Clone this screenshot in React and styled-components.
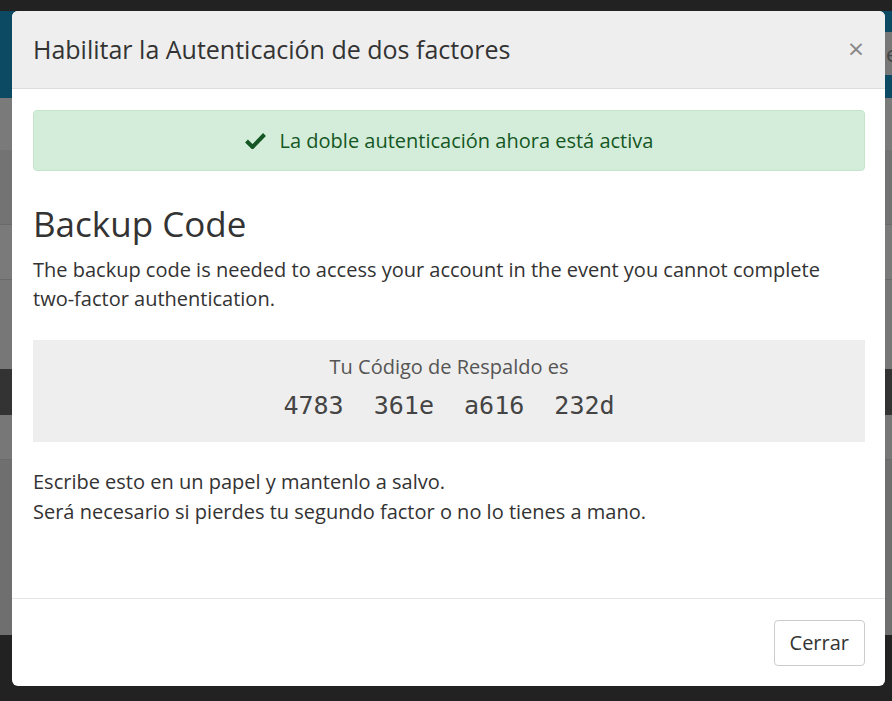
import styled, { createGlobalStyle } from 'styled-components';

const GlobalStyle = createGlobalStyle`
  html, body {
    margin: 0;
    padding: 0;
    background: #222;
    font-family: "Open Sans", "Liberation Sans", sans-serif;
    color: #333;
  }
  * { box-sizing: border-box; }
`;

// the dimmed page lying behind the modal
const Page = styled.div`
  position: relative;
  height: 701px;
  overflow: hidden;
  display: flex;
  flex-direction: column;
`;

const TopBar = styled.div`
  height: 11px;
  background: #222;
  flex-shrink: 0;
`;

const NavBar = styled.div`
  height: 87px;
  background: #0b4a62;
  display: flex;
  justify-content: flex-end;
  align-items: flex-start;
  padding-top: 21px;
  flex-shrink: 0;
`;

const SearchBox = styled.div`
  width: 60px;
  height: 43px;
  background: #777;
  color: #444;
  font-size: 22px;
  padding: 6px 0 0 4px;
  margin-right: -50px;
`;

const Row = styled.div`
  height: ${p => p.$h}px;
  background: ${p => p.$bg || '#777'};
  border-bottom: ${p => (p.$line ? '1px solid #6a6a6a' : 'none')};
  flex-shrink: 0;
`;

const Filler = styled.div`
  flex: 1;
  background: #222;
`;

const Modal = styled.div`
  position: absolute;
  top: 11px;
  left: 12px;
  width: 873px;
  height: 675px;
  background: #fff;
  border-radius: 6px;
  display: flex;
  flex-direction: column;
  overflow: hidden;
`;

const ModalHeader = styled.div`
  height: 78px;
  background: #eee;
  border-bottom: 1px solid #ddd;
  display: flex;
  align-items: center;
  justify-content: space-between;
  padding: 0 21px 2px;
  flex-shrink: 0;
`;

const Title = styled.h4`
  margin: 0;
  font-size: 25px;
  font-weight: 400;
  color: #333;
`;

const CloseButton = styled.button`
  background: none;
  border: none;
  padding: 0;
  color: #888;
  font-size: 28px;
  line-height: 1;
  font-family: "Open Sans", sans-serif;
  cursor: pointer;
  margin-top: -2px;
`;

const ModalBody = styled.div`
  flex: 1;
  padding: 21px 20px 21px 21px;
`;

const Alert = styled.div`
  height: 61px;
  background: #d4edda;
  border: 1px solid #c3e6cb;
  border-radius: 4px;
  color: #155724;
  font-size: 20px;
  display: flex;
  align-items: center;
  justify-content: center;
  gap: 14px;
`;

const Heading = styled.h2`
  margin: 32px 0 10px;
  font-size: 35px;
  font-weight: 400;
  line-height: 42px;
  color: #333;
`;

const Text = styled.p`
  margin: 0;
  font-size: 20px;
  line-height: ${p => p.$lh || 29}px;
  color: #333;
`;

const CodeBox = styled.div`
  margin: 27px 0 25px;
  height: 102px;
  background: #eee;
  display: flex;
  flex-direction: column;
  align-items: center;
  padding-top: 13px;
`;

const CodeLabel = styled.div`
  font-size: 20px;
  line-height: 28px;
  color: #555;
`;

const Code = styled.div`
  font-family: "DejaVu Sans Mono", "Liberation Mono", monospace;
  font-size: 25px;
  line-height: 36px;
  color: #444;
  white-space: pre;
  margin-top: 7px;
`;

const ModalFooter = styled.div`
  height: 88px;
  border-top: 1px solid #e5e5e5;
  display: flex;
  align-items: center;
  justify-content: flex-end;
  padding: 0 20px;
  flex-shrink: 0;
`;

const Button = styled.button`
  height: 46px;
  padding: 0 15px;
  background: #fff;
  border: 1px solid #ccc;
  border-radius: 4px;
  font-family: "Open Sans", sans-serif;
  font-size: 20px;
  color: #333;
  cursor: pointer;
`;

function CheckIcon() {
  return (
    <svg width="21" height="17" viewBox="0 0 21 17">
      <path d="M1.5 9 L7.5 15 L19.5 2.5" fill="none" stroke="#155724" strokeWidth="4" strokeLinejoin="miter" />
    </svg>
  );
}

export default function App() {
  return (
    <>
      <GlobalStyle />
      <Page>
        <TopBar />
        <NavBar>
          <SearchBox>e</SearchBox>
        </NavBar>
        <Row $h={52} $bg="#7a7a7a" />
        <Row $h={75} $bg="#737373" $line />
        <Row $h={55} $bg="#7a7a7a" $line />
        <Row $h={89} $bg="#777" />
        <Row $h={46} $bg="#333" />
        <Row $h={45} $bg="#777" $line />
        <Row $h={175} $bg="#6f6f6f" />
        <Filler />
        <Modal>
          <ModalHeader>
            <Title>Habilitar la Autenticación de dos factores</Title>
            <CloseButton>×</CloseButton>
          </ModalHeader>
          <ModalBody>
            <Alert>
              <CheckIcon />
              <span>La doble autenticación ahora está activa</span>
            </Alert>
            <Heading>Backup Code</Heading>
            <Text>
              The backup code is needed to access your account in the event you cannot complete
              two-factor authentication.
            </Text>
            <CodeBox>
              <CodeLabel>Tu Código de Respaldo es</CodeLabel>
              <Code>{'4783  361e  a616  232d'}</Code>
            </CodeBox>
            <Text $lh={30}>
              Escribe esto en un papel y mantenlo a salvo.
              <br />
              Será necesario si pierdes tu segundo factor o no lo tienes a mano.
            </Text>
          </ModalBody>
          <ModalFooter>
            <Button>Cerrar</Button>
          </ModalFooter>
        </Modal>
      </Page>
    </>
  );
}
